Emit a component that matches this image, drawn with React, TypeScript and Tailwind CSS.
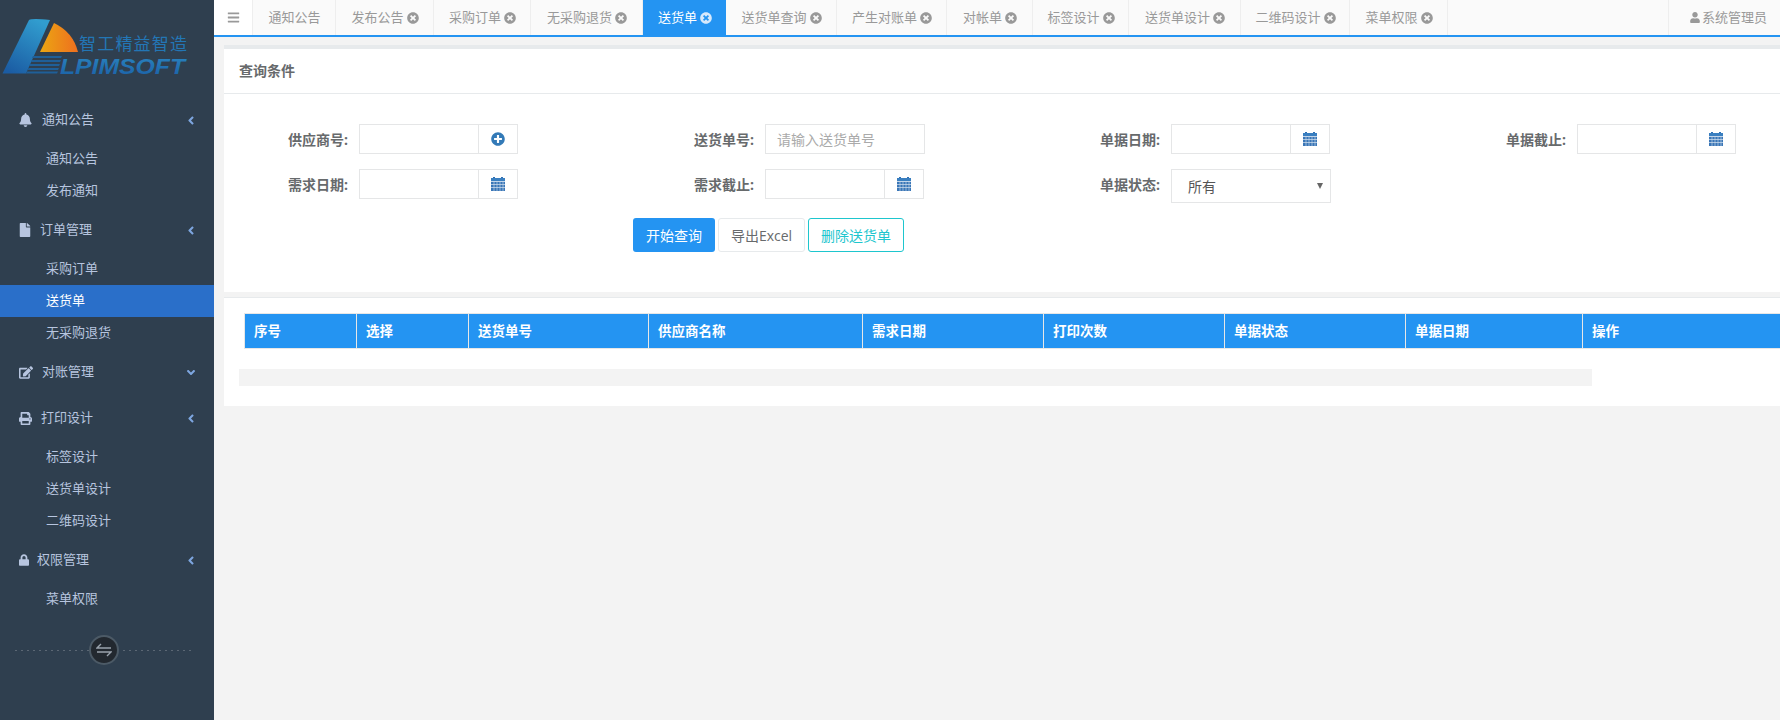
import React from "react";
import {
  FaBell, FaFile, FaEdit, FaPrint, FaLock, FaAngleLeft, FaAngleDown, FaPlusCircle,
  FaTimesCircle, FaUser, FaBars,
} from "react-icons/fa";

const menu = [
  { icon: <FaBell className="w-[13px] h-[14px]" />, tw: "w-[23px]", label: "通知公告", open: true, subs: ["通知公告", "发布通知"] },
  { icon: <FaFile className="w-[12px] h-[14px]" />, tw: "w-[21px]", label: "订单管理", open: true, subs: ["采购订单", "送货单", "无采购退货"] },
  { icon: <FaEdit className="w-[14px] h-[13px]" />, tw: "w-[23px]", label: "对账管理", open: false, subs: [] },
  { icon: <FaPrint className="w-[13px] h-[13px]" />, tw: "w-[22px]", label: "打印设计", open: true, subs: ["标签设计", "送货单设计", "二维码设计"] },
  { icon: <FaLock className="w-[10px] h-[12px]" />, tw: "w-[18px]", label: "权限管理", open: true, subs: ["菜单权限"] },
];

const tabs = [
  { t: "通知公告", w: "w-[83px]", close: false },
  { t: "发布公告", w: "w-[98px]", close: true },
  { t: "采购订单", w: "w-[97px]", close: true },
  { t: "无采购退货", w: "w-[112px]", close: true },
  { t: "送货单", w: "w-[83px]", close: true, active: true },
  { t: "送货单查询", w: "w-[111px]", close: true },
  { t: "产生对账单", w: "w-[110px]", close: true },
  { t: "对帐单", w: "w-[86px]", close: true },
  { t: "标签设计", w: "w-[96px]", close: true },
  { t: "送货单设计", w: "w-[112px]", close: true },
  { t: "二维码设计", w: "w-[109px]", close: true },
  { t: "菜单权限", w: "w-[98px]", close: true },
];

const cols = [
  { t: "序号", w: "w-[112px]" },
  { t: "选择", w: "w-[112px]" },
  { t: "送货单号", w: "w-[180px]" },
  { t: "供应商名称", w: "w-[214px]" },
  { t: "需求日期", w: "w-[181px]" },
  { t: "打印次数", w: "w-[181px]" },
  { t: "单据状态", w: "w-[181px]" },
  { t: "单据日期", w: "w-[177px]" },
  { t: "操作", w: "w-[220px]" },
];

function Logo() {
  return (
    <svg width="214" height="97" viewBox="0 0 214 97" className="block">
      <defs>
        <linearGradient id="lb" x1="0.7" y1="0" x2="0.2" y2="1">
          <stop offset="0" stopColor="#319dcf" />
          <stop offset="1" stopColor="#1b5ca3" />
        </linearGradient>
        <linearGradient id="lo" x1="0" y1="0" x2="1" y2="0">
          <stop offset="0" stopColor="#eca612" />
          <stop offset="1" stopColor="#ee6f1f" />
        </linearGradient>
        <linearGradient id="lt" x1="0" y1="0" x2="0" y2="1">
          <stop offset="0" stopColor="#2b86c0" />
          <stop offset="1" stopColor="#1a5fa6" />
        </linearGradient>
      </defs>
      <path d="M2.5 73.5 L29 20 Q32 18 50 20 L26 73.500 Z" fill="url(#lb)" />
      <path d="M40 52 L54 23 Q73 32 78 52 Z" fill="url(#lo)" />
      <g fill="#1f5f98">
        <path d="M33 56 H62 L61 58 H32 Z" />
        <path d="M32 60 H61 L60 62 H31 Z" />
        <path d="M30 64 H60 L59 66 H29 Z" />
        <path d="M28.5 68 H59 L58 70 H27.500 Z" />
        <path d="M27 71.500 H58 L57 73.500 H26 Z" />
      </g>
      <text x="79" y="50" fill="#2376b5" fontSize="17" fontFamily="'Noto Sans CJK SC', sans-serif" textLength="108">智工精益智造</text>
      <text x="60" y="73.500" fill="url(#lt)" fontSize="22" fontWeight="700" fontStyle="italic" fontFamily="'Liberation Sans', sans-serif" textLength="125" lengthAdjust="spacingAndGlyphs">LPIMSOFT</text>
    </svg>
  );
}

function Calendar() {
  return (
    <svg width="14" height="14" viewBox="0 0 14 14" className="block">
      <rect x="2" y="0" width="2" height="2" fill="#2f6fb3" />
      <rect x="10" y="0" width="2" height="2" fill="#2f6fb3" />
      <rect x="0" y="1" width="14" height="3" fill="#3a7fc0" />
      <rect x="0" y="4" width="14" height="1" fill="#c4d6ea" />
      <rect x="0" y="5" width="14" height="9" fill="#3a76b7" />
      <g fill="#d5e2f0">
        <rect x="0" y="7" width="14" height="1" opacity="0.7" />
        <rect x="0" y="10" width="14" height="1" opacity="0.7" />
        <rect x="2.500" y="5" width="1" height="9" opacity="0.6" />
        <rect x="5.500" y="5" width="1" height="9" opacity="0.6" />
        <rect x="8.500" y="5" width="1" height="9" opacity="0.6" />
        <rect x="11.500" y="5" width="1" height="9" opacity="0.6" />
      </g>
    </svg>
  );
}

const dots =
  "h-px bg-[repeating-linear-gradient(90deg,#5b6774_0,#5b6774_2px,transparent_2px,transparent_6px)]";

function Sidebar() {
  return (
    <aside className="w-[214px] shrink-0 bg-[#2f3f4f] h-[720px] text-[13px] text-[#b7c5df]">
      <Logo />
      {menu.map((m) => (
        <div key={m.label}>
          <div className="h-[46px] flex items-center pl-[19px] pr-[18px]">
            <span className={m.tw + " shrink-0 flex items-center"}>{m.icon}</span>
            <span className="flex-1">{m.label}</span>
            {m.open ? (
              <FaAngleLeft className="w-[10px] h-[13px] text-[#7ea6e0]" />
            ) : (
              <FaAngleDown className="w-[10px] h-[13px] text-[#7ea6e0]" />
            )}
          </div>
          {m.subs.map((s) => (
            <div
              key={s}
              className={
                s === "送货单"
                  ? "h-[32px] flex items-center pl-[46px] bg-[#2a6fc9] text-white"
                  : "h-[32px] flex items-center pl-[46px]"
              }
            >
              {s}
            </div>
          ))}
        </div>
      ))}
      <div className="mt-[20px] h-[30px] flex items-center pl-[15px]">
        <div className={"w-[74px] " + dots} />
        <div className="w-[30px] h-[30px] rounded-full bg-[#22282f] border-2 border-[#4c5a66] flex items-center justify-center">
          <svg width="16" height="14" viewBox="0 0 16 14" fill="none" stroke="#9aa3ad" strokeWidth="1.4">
            <path d="M5 1 L1 5 H15" />
            <path d="M1 9 H15 L11 13" />
          </svg>
        </div>
        <div className={"w-[68px] ml-[4px] " + dots} />
      </div>
    </aside>
  );
}

function TopBar() {
  return (
    <div className="h-[37px] flex border-b-2 border-[#2494f2] bg-[#fafafa] text-[13px] text-[#999999]">
      <div className="w-[39px] shrink-0 bg-white border-r border-[#eeeeee] flex items-center justify-center">
        <FaBars className="w-[13px] h-[13px] text-[#999999]" />
      </div>
      {tabs.map((t) => (
        <div
          key={t.t}
          className={
            t.w +
            " shrink-0 flex items-center justify-center gap-[3px] pl-[1px] " +
            (t.active ? "bg-[#2494f2] text-white" : "border-r border-[#eeeeee]")
          }
        >
          <span>{t.t}</span>
          {t.close && (
            <FaTimesCircle
              className={t.active ? "w-[12px] h-[12px] text-[#d6e8fb]" : "w-[12px] h-[12px] text-[#999999]"}
            />
          )}
        </div>
      ))}
      <div className="flex-1" />
      <div className="w-[112px] shrink-0 border-l border-[#eeeeee] flex items-center pl-[21px] gap-[2px]">
        <FaUser className="w-[10px] h-[11px]" />
        <span>系统管理员</span>
      </div>
    </div>
  );
}

function Addon({ plus }: { plus?: boolean }) {
  return (
    <div className="w-[159px] h-[30px] flex border border-[#e5e6e7] bg-white">
      <div className="flex-1 border-r border-[#e5e6e7]" />
      <div className="w-[38px] flex items-center justify-center text-[#337ab7]">
        {plus ? <FaPlusCircle className="w-[14px] h-[14px]" /> : <Calendar />}
      </div>
    </div>
  );
}

function Field({ label, children }: { label: string; children: React.ReactNode }) {
  return (
    <div className="flex items-start">
      <label className="w-[135px] h-[30px] pr-[11px] flex items-center justify-end text-[14px] font-bold text-[#676a6c]">
        {label}
      </label>
      {children}
    </div>
  );
}

function Filters() {
  return (
    <section className="border-t-4 border-[#e7eaec] bg-white h-[247px]">
      <div className="h-[45px] pb-[2px] border-b border-[#e7eaec] flex items-center pl-[15px] text-[14px] font-bold text-[#676a6c]">
        查询条件
      </div>
      <div className="pt-[30px] grid grid-cols-[repeat(4,406px)] gap-y-[15px] items-start">
        <Field label="供应商号:"><Addon plus /></Field>
        <Field label="送货单号:">
          <div className="w-[160px] h-[30px] border border-[#e5e6e7] flex items-center pl-[11px] text-[14px] text-[#aaaaaa]">
            请输入送货单号
          </div>
        </Field>
        <Field label="单据日期:"><Addon /></Field>
        <Field label="单据截止:"><Addon /></Field>
        <Field label="需求日期:"><Addon /></Field>
        <Field label="需求截止:"><Addon /></Field>
        <Field label="单据状态:">
          <div className="relative w-[160px] h-[34px] border border-[#e5e6e7] flex items-center pl-[16px] text-[14px] text-[#555555]">
            所有
            <span className="absolute right-[7px] top-[13px] w-0 h-0 border-l-[3px] border-r-[3px] border-t-[6px] border-l-transparent border-r-transparent border-t-[#666666]" />
          </div>
        </Field>
      </div>
      <div className="mt-[15px] pl-[409px] flex gap-[3px] text-[14px]">
        <button className="w-[82px] h-[34px] rounded-[3px] bg-[#2494f2] text-white">开始查询</button>
        <button className="w-[87px] h-[34px] rounded-[3px] border border-[#e7eaec] bg-white text-[#676a6c]">导出Excel</button>
        <button className="w-[96px] h-[34px] rounded-[3px] border border-[#1ec6ce] bg-white text-[#1ec6ce]">删除送货单</button>
      </div>
    </section>
  );
}

function TableCard() {
  return (
    <section className="mt-[5px] border-t border-[#e7eaec] bg-white h-[109px] pt-[15px]">
      <div className="ml-[20px] h-[36px] flex border-y border-[#e7e7e7] bg-[#2494f2] text-white text-[13.5px] font-bold w-max">
        {cols.map((c) => (
          <div key={c.t} className={c.w + " shrink-0 border-l border-[#e7e7e7] pl-[9px] flex items-center"}>
            {c.t}
          </div>
        ))}
      </div>
      <div className="mt-[20px] ml-[15px] w-[1353px] h-[17px] bg-[#f3f3f3]" />
    </section>
  );
}

export default function App() {
  return (
    <div
      className="w-[1780px] h-[720px] overflow-hidden flex bg-[#f3f3f3]"
      style={{ fontFamily: "'Open Sans', 'Noto Sans CJK SC', sans-serif" }}
    >
      <Sidebar />
      <main className="flex-1 min-w-0 overflow-hidden">
        <TopBar />
        <div className="pt-[8px] pl-[10px] w-[1640px]">
          <Filters />
          <TableCard />
        </div>
      </main>
    </div>
  );
}
